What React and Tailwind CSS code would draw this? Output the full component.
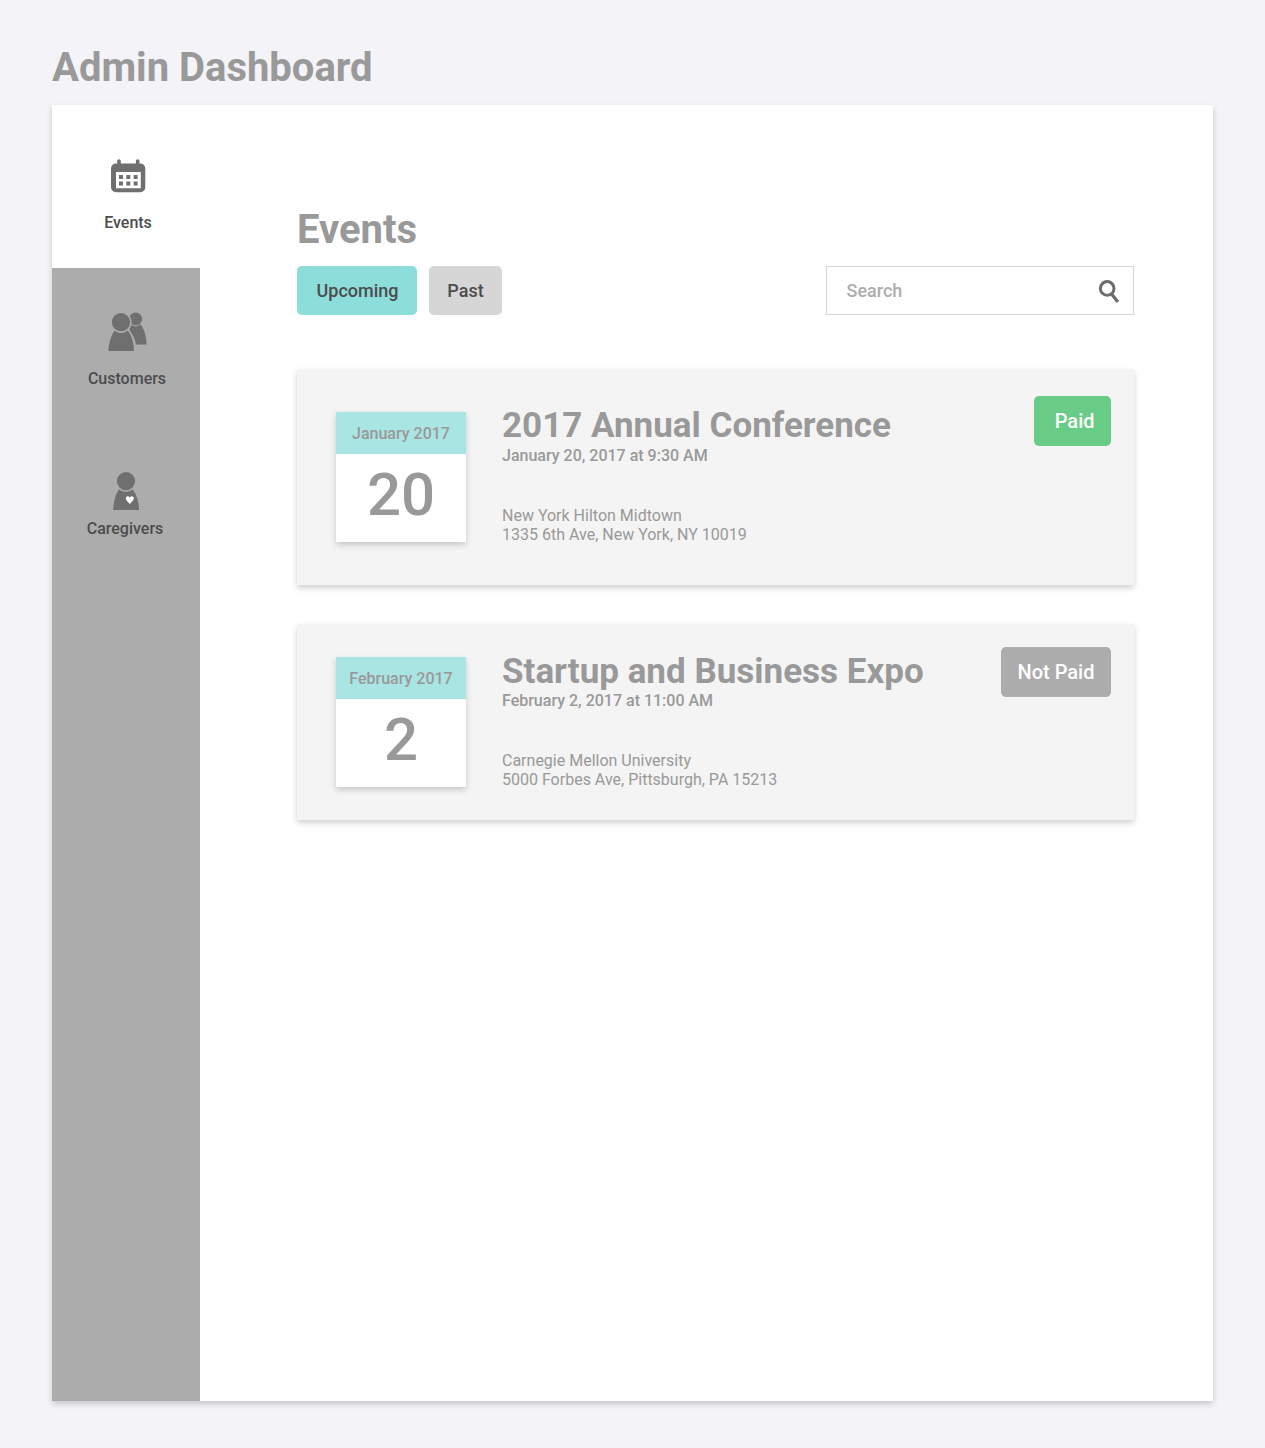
import React from "react";

function CalendarIcon() {
  return (
    <svg width="36" height="34" viewBox="0 0 36 34" fill="none">
      <path d="M9 2v6M27.7 2v6" stroke="#6f6f6f" strokeWidth="3.6" strokeLinecap="round" />
      <path
        fillRule="evenodd"
        fill="#6f6f6f"
        d="M6 4.5h24.3a5 5 0 0 1 5 5v18.8a5 5 0 0 1-5 5H6a5 5 0 0 1-5-5V9.5a5 5 0 0 1 5-5ZM6 13v16.3h24.8V13Z"
      />
      <path
        fill="#6f6f6f"
        d="M9 16h4v4H9zM16.3 16h4v4h-4zM23.6 16h4v4h-4zM9 22.5h4v4H9zM16.3 22.5h4v4h-4zM23.6 22.5h4v4h-4z"
      />
    </svg>
  );
}

function CustomersIcon() {
  return (
    <svg width="40" height="40" viewBox="0 0 40 40" fill="#6f6f6f">
      <circle cx="27.6" cy="7" r="6.5" />
      <path d="M22.2 12.6Q27.6 16.4 32.6 12.2Q38.5 20 38.5 32.6H28Q26.5 24 21.5 18.4Z" />
      <path
        stroke="#acacac"
        strokeWidth="1.4"
        d="M6.3 17.6Q13 22.4 20 17.4Q26.5 26 26.8 39.7H-.4Q0 27 6.3 17.6Z"
      />
      <circle cx="13" cy="10.2" r="9.9" stroke="#acacac" strokeWidth="1.6" />
    </svg>
  );
}

function CaregiversIcon() {
  return (
    <svg width="28" height="39" viewBox="0 0 28 39" fill="#6f6f6f">
      <circle cx="14" cy="9.1" r="9.1" />
      <path d="M6.8 17.6Q14 22.2 20.9 17.6Q26.8 26 27.1 37.9H1.2Q1.5 26 6.8 17.6Z" />
      <path
        fill="#fff"
        d="M17.8 31.9L14.4 28.2Q13.2 26.6 14.1 25.1Q16 23 17.8 25.6Q19.7 23 21.5 25.1Q22.4 26.6 21.2 28.2Z"
      />
    </svg>
  );
}

function SearchIcon() {
  return (
    <svg width="22" height="24" viewBox="0 0 22 24" fill="none" stroke="#6b6b6b">
      <circle cx="9.2" cy="9.4" r="6.8" strokeWidth="3" />
      <path d="M13.2 14.4L19.9 23" strokeWidth="3.2" />
    </svg>
  );
}

function DateTile({ month, day }) {
  return (
    <div className="h-[130px] w-[130px] shrink-0 bg-white text-center font-medium shadow-[0_3px_6px_rgba(0,0,0,0.18)]">
      <div className="h-[42px] bg-[#a9e5e2] text-[16px] leading-[43px]">{month}</div>
      <div className="pt-[6px] text-[60px] leading-[70px]">{day}</div>
    </div>
  );
}

function EventCard({ month, day, title, time, venue, address, className, tileClass, textClass, titleClass, badge, badgeClass }) {
  return (
    <article
      className={`flex w-[837px] items-start bg-[#f4f4f4] pl-[39px] pr-[23px] text-[#999999] shadow-[0_3px_6px_rgba(0,0,0,0.18)] ${className}`}
    >
      <div className={tileClass}>
        <DateTile month={month} day={day} />
      </div>
      <div className={`ml-9 flex-1 whitespace-nowrap ${textClass}`}>
        <h2 className={`text-[35px] font-bold ${titleClass}`}>{title}</h2>
        <p className="text-[16px] font-medium leading-[19px]">{time}</p>
        <p className="mt-[41px] text-[16px] leading-[19px]">{venue}</p>
        <p className="text-[16px] leading-[19px]">{address}</p>
      </div>
      <div
        className={`h-[50px] rounded-[5px] pr-[16.5px] text-right text-[20px] font-medium leading-[51px] text-white ${badgeClass}`}
      >
        {badge}
      </div>
    </article>
  );
}

export default function App() {
  return (
    <div className="h-[1448px] w-[1265px] bg-[#f3f3f8] px-[52px] pt-11 font-['Roboto',sans-serif] text-[#999999]">
      <h1 className="text-[40px] font-bold leading-[47px]">Admin Dashboard</h1>
      <div className="mt-[14px] flex h-[1296px] w-[1161px] bg-white shadow-[0_3px_6px_rgba(0,0,0,0.18)]">
        <nav className="flex w-[148px] shrink-0 flex-col bg-[#acacac] text-center text-[16px] font-medium leading-[19px] text-[#4c4c4c]">
          <a className="flex h-[163px] flex-col items-center bg-white pl-1 pt-[54px]">
            <CalendarIcon />
            <span className="mt-5">Events</span>
          </a>
          <a className="mt-[44px] flex flex-col items-center pl-[2px]">
            <span className="pl-[2px]">
              <CustomersIcon />
            </span>
            <span className="mt-[17px]">Customers</span>
          </a>
          <a className="mt-[84px] flex flex-col items-center">
            <CaregiversIcon />
            <span className="mt-2 pr-[2px]">Caregivers</span>
          </a>
        </nav>
        <main className="ml-[97px] w-[837px] pt-[101px]">
          <h2 className="text-[40px] font-bold leading-[47px]">Events</h2>
          <div className="mt-[13px] flex h-[49px] items-stretch">
            <button className="w-[120px] rounded-[5px] bg-[#8cdedb] pl-px text-[18px] font-medium text-[#4c4c4c]">
              Upcoming
            </button>
            <button className="ml-3 w-[73px] rounded-[5px] bg-[#d6d6d6] text-[18px] font-medium text-[#4c4c4c]">
              Past
            </button>
            <div className="ml-auto flex w-[308px] items-center justify-between border border-[#d6d6d6] bg-white pl-[19.5px] pr-[13px] text-[18px] font-medium text-[#adadad]">
              <span>Search</span>
              <SearchIcon />
            </div>
          </div>
          <EventCard
            className="mt-[54px] h-[216px]"
            tileClass="mt-[43px]"
            textClass="mt-[36px]"
            titleClass="leading-[41px]"
            month="January 2017"
            day="20"
            title="2017 Annual Conference"
            time="January 20, 2017 at 9:30 AM"
            venue="New York Hilton Midtown"
            address="1335 6th Ave, New York, NY 10019"
            badge="Paid"
            badgeClass="mt-[27px] w-[77px] bg-[#69cc86]"
          />
          <EventCard
            className="mt-[39px] h-[196px]"
            tileClass="mt-[33px]"
            textClass="mt-[27px]"
            titleClass="-mb-px leading-[41px]"
            month="February 2017"
            day="2"
            title="Startup and Business Expo"
            time="February 2, 2017 at 11:00 AM"
            venue="Carnegie Mellon University"
            address="5000 Forbes Ave, Pittsburgh, PA 15213"
            badge="Not Paid"
            badgeClass="mt-[23px] w-[110px] bg-[#acacac]"
          />
        </main>
      </div>
    </div>
  );
}
